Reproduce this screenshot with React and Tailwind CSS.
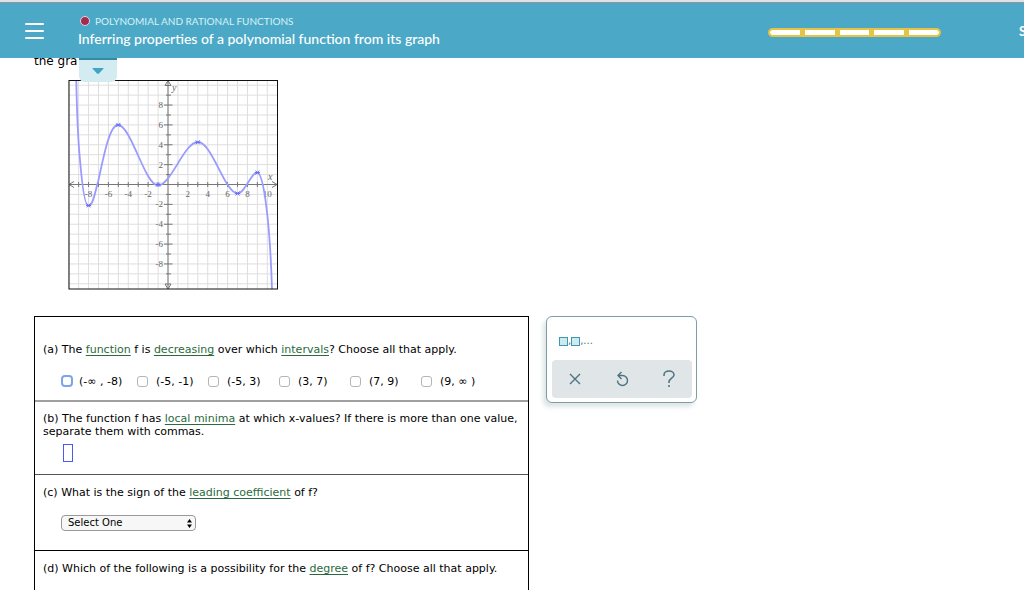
import clsx from "clsx";

const INTERVALS = ["(-∞ , -8)", "(-5, -1)", "(-5, 3)", "(3, 7)", "(7, 9)", "(9, ∞ )"];

const UNIT = 9.93;
const ORIGIN = { x: 168, y: 184.5 };
const GRID = Array.from({ length: 21 }, (_, i) => i - 10);
const TICKS = GRID.filter((n) => n !== 0 && Math.abs(n) < 10);
const X_LABELS = [-8, -6, -4, -2, 2, 4, 6, 8, 10];
const Y_LABELS = [8, 6, 4, 2, -2, -4, -6, -8];
const EXTREMA = [[-8, -2.1], [-5, 6], [-1, 0], [3, 4.25], [7, -0.9], [9, 1.2]];

const toX = (n) => ORIGIN.x + n * UNIT;
const toY = (n) => ORIGIN.y - n * UNIT;

function Term({ children }) {
  return (
    <a href="#glossary" className="text-[#2a6a3c] underline underline-offset-2">
      {children}
    </a>
  );
}

function Header() {
  return (
    <header className="relative z-10 shrink-0">
      <div className="h-[3px] border-b border-[#8f979b] bg-[#e0e1e6]" />
      <div className="flex h-[55px] items-center overflow-hidden bg-[#4ba9c7] text-white">
        <button type="button" aria-label="Menu" className="ml-[25px] flex w-[19px] shrink-0 flex-col gap-[5px]">
          <span className="h-[2px] rounded bg-white" />
          <span className="h-[2px] rounded bg-white" />
          <span className="h-[2px] rounded bg-white" />
        </button>
        <div className="ml-[34px] min-w-0 flex-1 whitespace-nowrap font-['Lato',sans-serif]">
          <p className="flex items-center gap-[5px] pl-[2px] text-[10px] leading-4 text-[#d8f1f6]">
            <span className="h-[10px] w-[10px] rounded-full border border-[#e9d5dd] bg-[#a02c4f]" />
            POLYNOMIAL AND RATIONAL FUNCTIONS
          </p>
          <h1 className="text-[14px] font-medium leading-5">Inferring properties of a polynomial function from its graph</h1>
        </div>
        <div className="flex w-[256px] shrink-0 items-center pt-[3px]">
          <div className="flex h-[9px] w-[173px] shrink-0 gap-[5px] overflow-hidden rounded-full border-2 border-[#e6c245] bg-[#e6c245]">
            {[0, 1, 2, 3, 4].map((step) => (
              <span
                key={step}
                className={clsx("flex-1 bg-white", step === 0 && "rounded-l-full", step === 4 && "rounded-r-full")}
              />
            ))}
          </div>
          <span className="ml-[78px] font-['Lato',sans-serif] text-[13px] font-bold">S</span>
        </div>
      </div>
      <button
        type="button"
        aria-label="Expand"
        className="absolute left-[79px] top-full flex h-6 w-[38px] items-center justify-center rounded-b-md border-t-2 border-[#3a8a9f] bg-[#d2ecf1]"
      >
        <svg width="12" height="8" viewBox="0 0 12 8" fill="#3fa5c3" aria-hidden>
          <path d="M1 1h10q1 0 .4.8L7 6.4q-1 .9-2 0L.6 1.8Q0 1 1 1Z" />
        </svg>
      </button>
    </header>
  );
}

function Graph() {
  return (
    <svg className="block" width="210" height="210" viewBox="68 80 210 210" fill="none" role="img" aria-label="Graph of f">
      <g stroke="#dedede" strokeWidth="1">
        {GRID.map((n) => (
          <path key={n} d={`M${toX(n)} 81V289M69 ${toY(n)}H277`} />
        ))}
      </g>
      <g stroke="#777" strokeWidth="1">
        <path d="M69 184.5H277M168 81V289" />
        {TICKS.map((n) => (
          <path key={n} d={`M${toX(n)} 182V187M${n % 2 ? 166 : 164} ${toY(n)}H${n % 2 ? 171 : 172.5}`} />
        ))}
        <path d="M74 181.5l-5 3 5 3M272 181.5l5 3-5 3M165 85.5l3-5 3 5ZM165 284l3 5 3-5Z" />
      </g>
      <g fill="#666" fontSize="9" fontFamily="Liberation Serif, serif">
        {X_LABELS.map((n) => (
          <text key={n} x={toX(n)} y="197" textAnchor="middle">{n}</text>
        ))}
        {Y_LABELS.map((n) => (
          <text key={n} x="163" y={toY(n) + 3} textAnchor="end">{n}</text>
        ))}
        <text x="172" y="91" fontSize="10" fontStyle="italic">y</text>
        <text x="268" y="180" fontSize="10" fontStyle="italic">x</text>
      </g>
      <path
        d="M76.3 81C77 115 78 140 80 160C82 184 85 206 88.5 206C93 206 95 192 98 182C103 160 109 125 118 125C131 125 145 185.5 158 185.5C171 185.5 184 142 198 142C212 142 225 193.5 237.5 193.5C245 193.5 251 172.5 257 172.5C264 172.5 270 225 272 289"
        stroke="#9b9bff"
        strokeWidth="1.8"
      />
      <g stroke="#6a6af5" strokeWidth="1">
        {EXTREMA.map(([x, y]) => (
          <path key={x} d={`M${toX(x) - 2} ${toY(y) - 2}l4 4m0-4l-4 4m-.5-2h5`} />
        ))}
      </g>
      <rect x="69" y="80.5" width="208.5" height="208.5" stroke="#111" />
    </svg>
  );
}

function Questions() {
  return (
    <section className="w-full max-w-[495px] border border-black text-[11px] leading-[13px]">
      <fieldset className="h-[85px] border-b-2 border-[#a0a0a0] px-2 pt-[26px]">
        <p>
          (a) The <Term>function</Term> f is <Term>decreasing</Term> over which <Term>intervals</Term>? Choose all that apply.
        </p>
        <div className="mt-[18px] grid grid-cols-[76px_71px_71px_71px_71px_71px] pl-[18px]">
          {INTERVALS.map((interval, i) => (
            <label key={interval} className="flex h-[14px] items-center gap-2 whitespace-nowrap">
              <input
                type="checkbox"
                className={clsx(
                  "shrink-0 appearance-none bg-white",
                  i === 0 ? "-mr-[2px] h-3 w-3 rounded-[4px] border-2 border-[#7ba6ec]" : "h-[11px] w-[11px] rounded-[3px] border border-[#b5b5b5]"
                )}
              />
              {interval}
            </label>
          ))}
        </div>
      </fieldset>
      <div className="h-[73px] border-b border-[#555] px-2 pt-[10px]">
        <label htmlFor="minima" className="block">
          (b) The function f has <Term>local minima</Term> at which x-values? If there is more than one value, separate them with commas.
        </label>
        <input id="minima" className="ml-5 mt-[6px] block h-[18px] w-[10px] border border-[#4a5cf0] bg-white" />
      </div>
      <div className="h-[76px] border-b border-black px-2 pt-[11px]">
        <label htmlFor="sign" className="block">
          (c) What is the sign of the <Term>leading coefficient</Term> of f?
        </label>
        <div className="ml-[18px] mt-4 grid w-[135px] items-center">
          <select
            id="sign"
            className="col-start-1 row-start-1 h-4 w-full appearance-none rounded border border-[#999] bg-[#f7f7f7] pl-[6px] text-[10px] leading-[14px]"
          >
            <option>Select One</option>
          </select>
          <svg
            className="pointer-events-none col-start-1 row-start-1 mr-1 justify-self-end"
            width="5"
            height="9"
            viewBox="0 0 5 9"
            aria-hidden
          >
            <path d="M2.5 0L5 3.5H0ZM2.5 9L0 5.5H5Z" />
          </svg>
        </div>
      </div>
      <div className="h-[120px] px-2 pt-[11px]">
        (d) Which of the following is a possibility for the <Term>degree</Term> of f? Choose all that apply.
      </div>
    </section>
  );
}

function AnswerTools() {
  return (
    <aside className="h-[87px] w-[151px] shrink-0 rounded-md border border-[#7f9da5] bg-white pl-[5px] pr-1 shadow-[-3px_4px_4px_rgba(120,150,160,0.25)]">
      <button type="button" aria-label="List of values" className="flex h-[43px] items-center pl-[7px] pt-[5px] text-[10px] leading-3 text-[#4a7480]">
        <span className="h-[9px] w-[9px] border border-[#3d97b2] bg-[#ccebf1]" />,
        <span className="h-[9px] w-[9px] border border-[#3d97b2] bg-[#ccebf1]" />,...
      </button>
      <div className="grid h-[38px] grid-cols-3 rounded-sm bg-[#e0e5e7] text-[#4a7480]">
        <button type="button" aria-label="Clear" className="flex items-center justify-center">
          <svg width="12" height="12" viewBox="0 0 12 12" stroke="currentColor" strokeWidth="1.4" aria-hidden>
            <path d="M1 1l10 10M11 1L1 11" />
          </svg>
        </button>
        <button type="button" aria-label="Undo" className="flex items-center justify-center">
          <svg width="14" height="16" viewBox="0 0 14 16" fill="none" stroke="currentColor" strokeWidth="1.4" aria-hidden>
            <path d="M6.5 1L3 4.5L6.5 8M3 4.5H7.5a5 5 0 1 1-5 5" />
          </svg>
        </button>
        <button type="button" aria-label="Help" className="flex items-center justify-center">
          <svg width="12" height="18" viewBox="0 0 12 18" fill="none" stroke="currentColor" strokeWidth="1.5" aria-hidden>
            <path d="M1 6V5a5 4 0 0 1 10 0C11 8 6 8.5 6 12v1M6 15v2" />
          </svg>
        </button>
      </div>
    </aside>
  );
}

export default function App() {
  return (
    <div className="flex h-screen flex-col overflow-hidden bg-white font-['DejaVu_Sans',Verdana,sans-serif] text-black">
      <Header />
      <main className="-mt-[5px] pl-[34px]">
        <p className="text-[12px] leading-4">the gra</p>
        <div className="pl-[34px] pt-[11px]">
          <Graph />
        </div>
        <div className="mt-[26px] flex items-start gap-[17px]">
          <Questions />
          <AnswerTools />
        </div>
      </main>
    </div>
  );
}
